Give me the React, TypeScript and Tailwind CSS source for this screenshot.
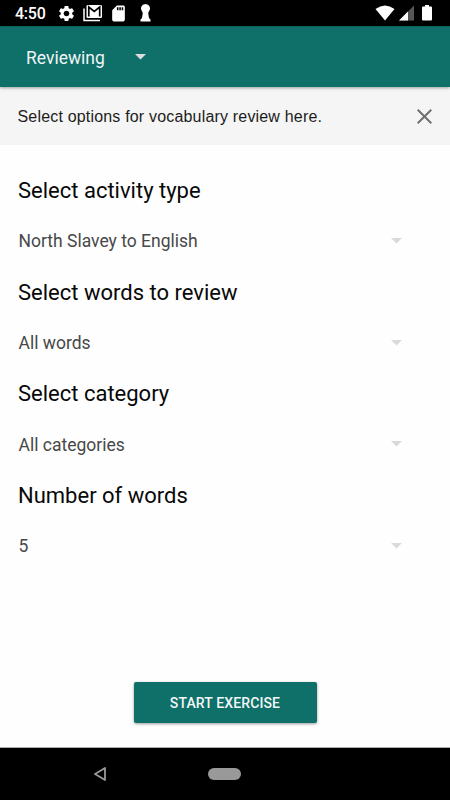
import { MdSdStorage, MdSettings } from "react-icons/md";

const fields = [
  { label: "Select activity type", value: "North Slavey to English" },
  { label: "Select words to review", value: "All words" },
  { label: "Select category", value: "All categories" },
  { label: "Number of words", value: "5" },
];

const Caret = ({ className }: { className: string }) => (
  <svg width="11" height="6" viewBox="0 0 11 6" className={className}>
    <path d="M0 0h11L5.5 5.5z" fill="currentColor" />
  </svg>
);

const StatusBar = () => (
  <div className="flex h-[26px] items-center bg-black pl-[15px] pr-[18px] text-white">
    <span className="w-[42px] text-[16px] font-medium leading-none tracking-[-0.25px] pt-[2px]">
      4:50
    </span>
    <MdSettings size={19} className="shrink-0" />

    {/* Mail */}
    <svg width="20" height="18" viewBox="0 0 20 18" className="ml-[7px]">
      <path d="M1 4.5V16.5H17" fill="none" stroke="white" strokeWidth="1.5" />
      <rect x="3.5" y="1" width="15.5" height="13" rx="1.2" fill="white" />
      <path
        d="M5.8 12.5V3L11.25 7.500 16.700 3V12.500"
        fill="none"
        stroke="black"
        strokeWidth="1.7"
      />
    </svg>

    <MdSdStorage size={19} className="ml-[6px] shrink-0" />

    {/* Keyhole */}
    <svg width="11" height="18" viewBox="0 0 11 18" className="ml-[11.5px]">
      <path
        d="M5.500 0a4.600 4.600 0 0 1 3.300 7.800L8.200 9l.8 5 1.500 1.500V17.500H.5V15.500L2 14l.8-5-.6-1.200A4.600 4.600 0 0 1 5.500 0z"
        fill="white"
      />
    </svg>

    <div className="ml-auto flex items-center">
      <svg width="20" height="16" viewBox="0 0 20 16">
        <path d="M.5 4Q10-3 19.500 4L10 15.500z" fill="white" />
      </svg>
      <svg width="15" height="16" viewBox="0 0 15 16" className="ml-[4px]">
        <path d="M15 .5v15H0z" fill="#555" />
        <path d="M9 6.500v9H0z" fill="white" />
      </svg>
      <svg width="10" height="16" viewBox="0 0 10 16" className="ml-[8px]">
        <path
          d="M3 0h4v1.500h2q1 0 1 1v12q0 1-1 1H1q-1 0-1-1v-12q0-1 1-1h2z"
          fill="white"
        />
      </svg>
    </div>
  </div>
);

const App = () => {
  return (
    <div className="flex h-[800px] w-[450px] flex-col overflow-hidden bg-[#fefefe] font-[Roboto,sans-serif]">
      <StatusBar />

      <header className="z-10 flex h-[61px] items-center border-t border-[#0b625b] bg-[#0e7069] pl-[26px] text-[#f0f5f5] shadow-[0_1px_3px_rgba(0,0,0,0.35)]">
        <span className="w-[108.5px] pt-[2px] text-[17.5px]">Reviewing</span>
        <Caret className="text-[#dddddd]" />
      </header>

      <div className="flex h-[58px] items-center justify-between bg-[#f5f5f5] pl-[17.5px] pr-[18px]">
        <p className="pt-[2px] font-['Liberation_Sans',sans-serif] text-[16px] tracking-[0.18px] text-[#1c1c1c]">
          Select options for vocabulary review here.
        </p>
        <svg width="15" height="15" viewBox="0 0 15 15">
          <path
            d="M.7.7l13.6 13.6M14.3.7L.7 14.3"
            stroke="#707070"
            strokeWidth="2"
          />
        </svg>
      </div>

      <main className="flex flex-1 flex-col pt-[20px]">
        {fields.map(({ label, value }) => (
          <section key={label} className="h-[101.7px] pl-[18px] pr-[48px]">
            <h2 className="flex h-[51px] items-center text-[22px] text-[#080808]">
              {label}
            </h2>
            <button
              type="button"
              className="flex h-[51px] w-full items-center justify-between pl-[0.5px] text-[17.5px] text-[#484848]"
            >
              {value}
              <Caret className="mb-px text-[#dadada]" />
            </button>
          </section>
        ))}

        <button
          type="button"
          className="mt-auto mb-[24px] h-[41px] w-[183px] self-center rounded-[2px] bg-[#0e7069] pt-[2px] text-[14px] font-medium tracking-[0.12px] text-[#f2f7f7] shadow-[0_1px_3px_rgba(0,0,0,0.4)]"
        >
          START EXERCISE
        </button>
      </main>

      <nav className="flex h-[53px] items-center border-t border-[#aaaaaa] bg-black pl-[93px]">
        <svg width="14" height="16" viewBox="0 0 14 16">
          <path
            d="M12 2v12L2 8z"
            fill="none"
            stroke="#999"
            strokeWidth="1.8"
            strokeLinejoin="round"
          />
        </svg>
        <div className="ml-[101px] h-[12px] w-[33px] rounded-full bg-[#999999]" />
      </nav>
    </div>
  );
};

export default App;
